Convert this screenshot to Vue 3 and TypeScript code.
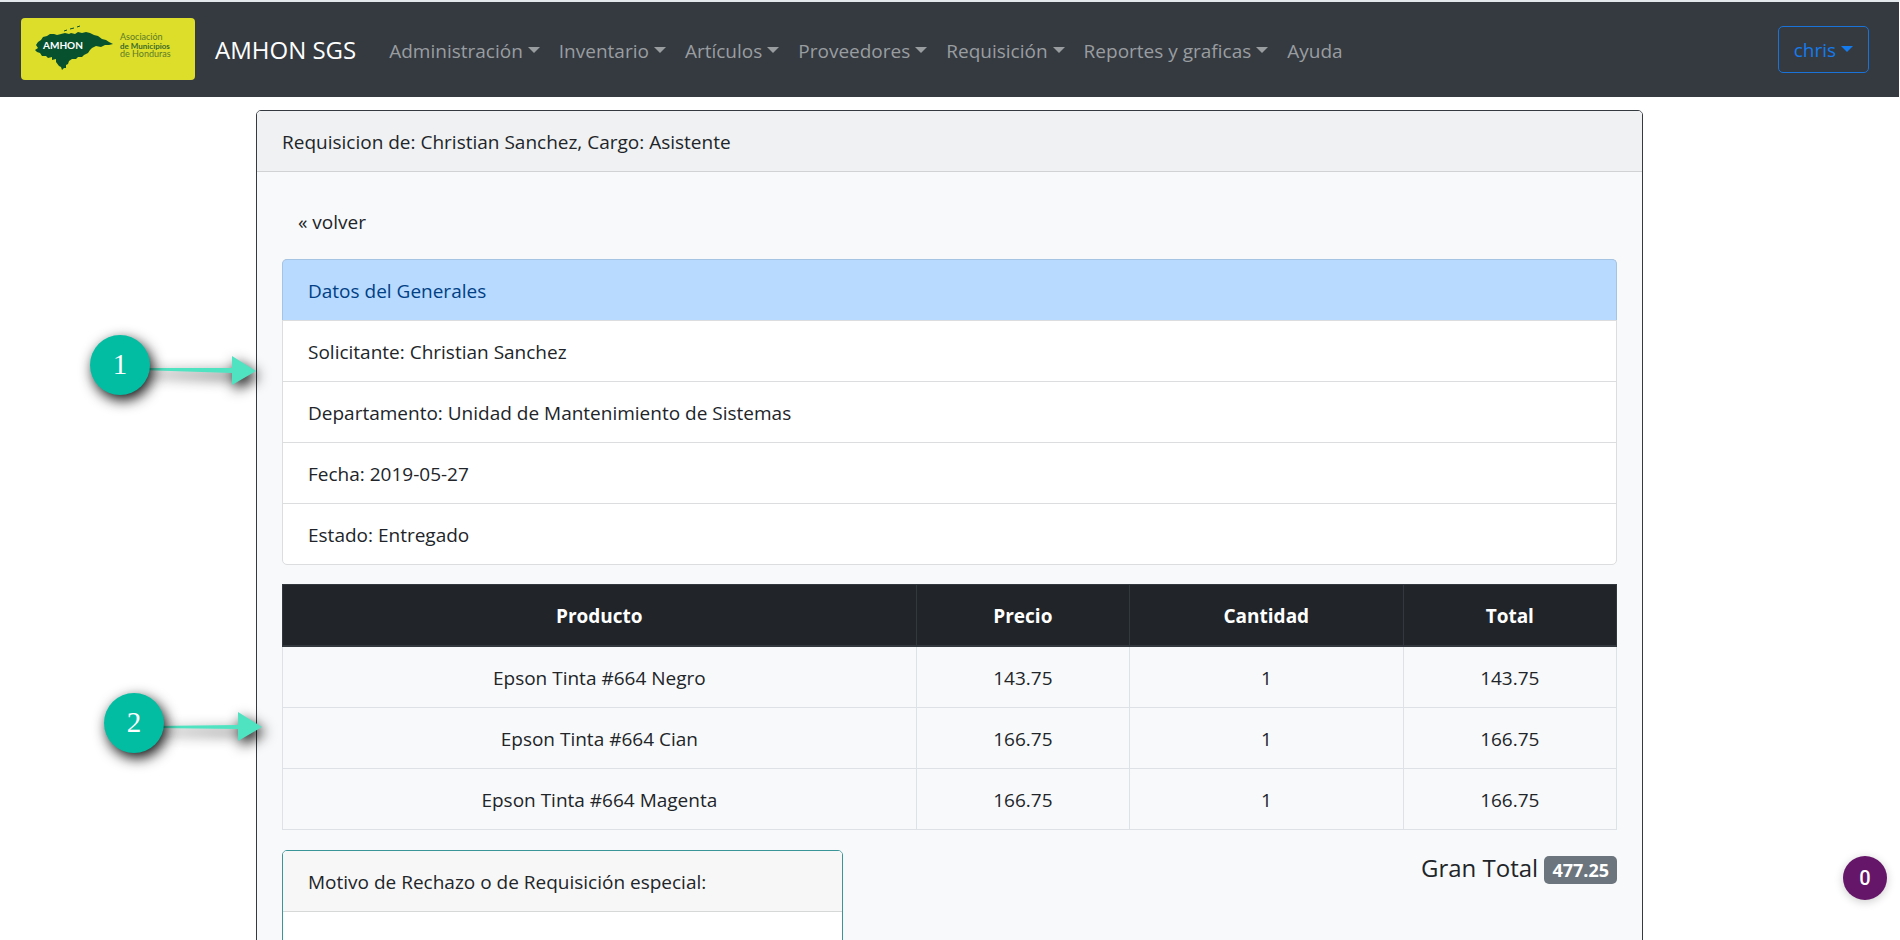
<script setup lang="ts">
const menus: { label: string; dropdown: boolean }[] = [
  { label: 'Administración', dropdown: true },
  { label: 'Inventario', dropdown: true },
  { label: 'Artículos', dropdown: true },
  { label: 'Proveedores', dropdown: true },
  { label: 'Requisición', dropdown: true },
  { label: 'Reportes y graficas', dropdown: true },
  { label: 'Ayuda', dropdown: false },
]

const details: string[] = [
  'Solicitante: Christian Sanchez',
  'Departamento: Unidad de Mantenimiento de Sistemas',
  'Fecha: 2019-05-27',
  'Estado: Entregado',
]

interface Line {
  product: string
  price: string
  quantity: number
  total: string
}

const lines: Line[] = [
  { product: 'Epson Tinta #664 Negro', price: '143.75', quantity: 1, total: '143.75' },
  { product: 'Epson Tinta #664 Cian', price: '166.75', quantity: 1, total: '166.75' },
  { product: 'Epson Tinta #664 Magenta', price: '166.75', quantity: 1, total: '166.75' },
]
</script>

<template>
  <div class="page">
    <header class="navbar">
      <a href="#" class="brand">
        <svg class="logo" viewBox="0 0 174 62" role="img" aria-label="AMHON">
          <rect width="174" height="62" rx="4" fill="#dcde29" />
          <path
            fill="#07512f"
            d="M14 32 L17 30 L15 27 L17 24 L20 22 L22 19 L26 18 L29 16 L33 16 L36 17 L40 16 L44 15 L48 16 L50 15 L54 16 L57 14 L61 15 L65 14 L69 15 L73 17 L77 18 L81 21 L85 22 L88 24 L92 26 L88 27 L84 27 L80 29 L75 28 L71 30 L69 32 L67 35 L63 37 L61 39 L57 39 L55 41 L51 41 L48 43 L47 46 L45 47 L45 50 L43 50 L41 52 L40 49 L38 48 L35 44 L35 41 L31 42 L31 39 L27 40 L25 38 L21 38 L19 35 L16 34 Z"
          />
          <path d="M43 13 l3 -1 M49 11 l4 -1 M56 9 l3 -1" stroke="#07512f" stroke-width="1" fill="none" />
          <text x="22" y="31" class="logo-name">AMHON</text>
          <text x="99" y="22" class="logo-text">Asociación</text>
          <text x="99" y="31" class="logo-text strong">de Municipios</text>
          <text x="99" y="39" class="logo-text">de Honduras</text>
        </svg>
        <span>AMHON SGS</span>
      </a>
      <nav class="menu">
        <a v-for="m in menus" :key="m.label" href="#" :class="{ caret: m.dropdown }">{{ m.label }}</a>
      </nav>
      <button type="button" class="user caret">chris</button>
    </header>

    <main class="container">
      <section class="card">
        <div class="card-header">Requisicion de: Christian Sanchez, Cargo: Asistente</div>
        <div class="card-body">
          <a href="#" class="back">« volver</a>
          <ul class="list">
            <li class="list-title">Datos del Generales</li>
            <li v-for="d in details" :key="d">{{ d }}</li>
          </ul>
          <table>
            <colgroup>
              <col class="col-product" />
              <col class="col-price" />
              <col class="col-quantity" />
              <col class="col-total" />
            </colgroup>
            <thead>
              <tr>
                <th scope="col">Producto</th>
                <th scope="col">Precio</th>
                <th scope="col">Cantidad</th>
                <th scope="col">Total</th>
              </tr>
            </thead>
            <tbody>
              <tr v-for="l in lines" :key="l.product">
                <td>{{ l.product }}</td>
                <td>{{ l.price }}</td>
                <td>{{ l.quantity }}</td>
                <td>{{ l.total }}</td>
              </tr>
            </tbody>
          </table>
          <div class="summary">
            <section class="reason">
              <div class="reason-header">Motivo de Rechazo o de Requisición especial:</div>
              <div class="reason-body"></div>
            </section>
            <div class="grand-total">Gran Total <strong>477.25</strong></div>
          </div>
        </div>
      </section>

      <svg class="callout first" width="220" height="120" viewBox="0 0 220 120" aria-label="1">
        <g class="shadowed">
          <path d="M80 58 L172 58 V46 L196 61 L172 75 V63 L80 60 Z" fill="#50e3c2" />
        </g>
        <g class="shadowed"><circle cx="60" cy="55" r="30" fill="#03bda3" /></g>
        <text x="60" y="64">1</text>
      </svg>
      <svg class="callout second" width="220" height="120" viewBox="0 0 220 120" aria-label="2">
        <g class="shadowed">
          <path d="M80 58 L164 57 V44 L188 59 L164 73 V61 L80 60 Z" fill="#50e3c2" />
        </g>
        <g class="shadowed"><circle cx="60" cy="55" r="30" fill="#03bda3" /></g>
        <text x="60" y="64">2</text>
      </svg>
    </main>

    <button type="button" class="counter">0</button>
  </div>
</template>

<style>
body {
  margin: 0;
}
</style>

<style scoped>
.page {
  position: relative;
  height: 100vh;
  overflow: hidden;
  box-sizing: border-box;
  border-top: 2px solid #e3e8ed;
  border-right: 1px solid #fff;
  background: #fff;
  color: #212529;
  font-family: 'Open Sans', 'Noto Sans', sans-serif;
  font-size: 19px;
  line-height: 30px;
}
.page * {
  box-sizing: border-box;
}
a {
  color: inherit;
  text-decoration: none;
}
.navbar {
  display: flex;
  align-items: center;
  height: 95px;
  padding: 0 30px 1px 21px;
  background: #343a40;
}
.brand {
  display: flex;
  align-items: center;
  gap: 20px;
  margin-right: 23px;
  color: #fff;
  font-size: 24px;
  line-height: 36px;
  white-space: nowrap;
}
.brand span {
  padding-top: 2px;
}
.logo {
  display: block;
  width: 174px;
  height: 62px;
}
.logo text {
  font-family: Lato, sans-serif;
}
.logo-name {
  fill: #fff;
  font-size: 10px;
  font-weight: 700;
}
.logo-text {
  fill: #5d7a28;
  font-size: 9px;
}
.logo-text.strong {
  fill: #3c6a2a;
  font-weight: 700;
  font-size: 8px;
}
.menu {
  display: flex;
  flex: 1;
  color: #9a9da0;
  white-space: nowrap;
}
.menu a {
  padding: 12px 9px 9px 10px;
}
.caret::after {
  content: '';
  display: inline-block;
  margin-left: 5px;
  vertical-align: 5px;
  border-top: 6px solid;
  border-right: 6px solid transparent;
  border-left: 6px solid transparent;
}
.user {
  padding: 8px 15px 7px;
  border: 1px solid #1a73d9;
  border-radius: 5px;
  background: transparent;
  color: #147bee;
  font: inherit;
}
.container {
  position: relative;
  max-width: 1425px;
  margin: 13px auto 0;
  padding: 0 19px;
}
.card {
  border: 1px solid #343a40;
  border-radius: 5px;
  background: #f8f9fa;
}
.card-header {
  padding: 16px 25px 14px;
  border-bottom: 1px solid #d0d2d3;
  border-radius: 4px 4px 0 0;
  background: #f0f1f2;
}
.card-body {
  padding: 25px;
}
.back {
  display: inline-block;
  margin-bottom: 12px;
  padding: 10px 16px;
}
.list {
  margin: 0 0 19px;
  padding: 0;
  border: 1px solid #dbddde;
  border-radius: 5px;
  background: #fff;
  list-style: none;
}
.list li {
  padding: 16px 25px 14px;
}
.list li + li {
  border-top: 1px solid #dbddde;
}
.list .list-title {
  margin: -1px -1px 0;
  border: 1px solid #a5c3e2;
  border-bottom: 0;
  border-radius: 5px 5px 0 0;
  background: #b8daff;
  color: #004085;
}
table {
  width: 100%;
  margin-bottom: 20px;
  border-collapse: collapse;
  table-layout: fixed;
  text-align: center;
}
.col-product {
  width: 47.5%;
}
.col-price,
.col-total {
  width: 16%;
}
th {
  padding: 16px 15px 14px;
  border: 1px solid #32383e;
  border-bottom-width: 2px;
  background: #212529;
  color: #fff;
  font-weight: 700;
}
td {
  padding: 16px 15px 14px;
  border: 1px solid #dee2e6;
}
.summary {
  display: flex;
  align-items: flex-start;
  justify-content: space-between;
}
.reason {
  width: 42%;
  border: 1px solid #3a9599;
  border-radius: 5px;
  background: #fff;
}
.reason-header {
  padding: 16px 25px 14px;
  border-bottom: 1px solid #d6d7d7;
  border-radius: 4px 4px 0 0;
  background: #f7f7f7;
}
.reason-body {
  height: 160px;
}
.grand-total {
  font-size: 24px;
  line-height: 36px;
}
.grand-total strong {
  display: inline-block;
  padding: 5px 8px;
  border-radius: 5px;
  background: #6c757d;
  color: #fff;
  font-size: 18px;
  line-height: 18px;
}
.callout {
  position: absolute;
  left: -177px;
  overflow: visible;
}
.callout.first {
  top: 200px;
}
.callout.second {
  left: -163px;
  top: 558px;
}
.callout text {
  fill: #fff;
  font-family: 'Liberation Serif', serif;
  font-size: 29px;
  text-anchor: middle;
}
.shadowed {
  filter: drop-shadow(3px 5px 7px rgba(0, 0, 0, 0.95));
}
.counter {
  position: absolute;
  right: 12px;
  bottom: 40px;
  width: 44px;
  height: 44px;
  padding: 0;
  border: 0;
  border-radius: 50%;
  background: #651668;
  box-shadow: 0 2px 10px rgba(0, 0, 0, 0.2);
  color: #fff;
  font-family: Roboto, sans-serif;
  font-size: 20px;
  font-weight: 500;
}
</style>
